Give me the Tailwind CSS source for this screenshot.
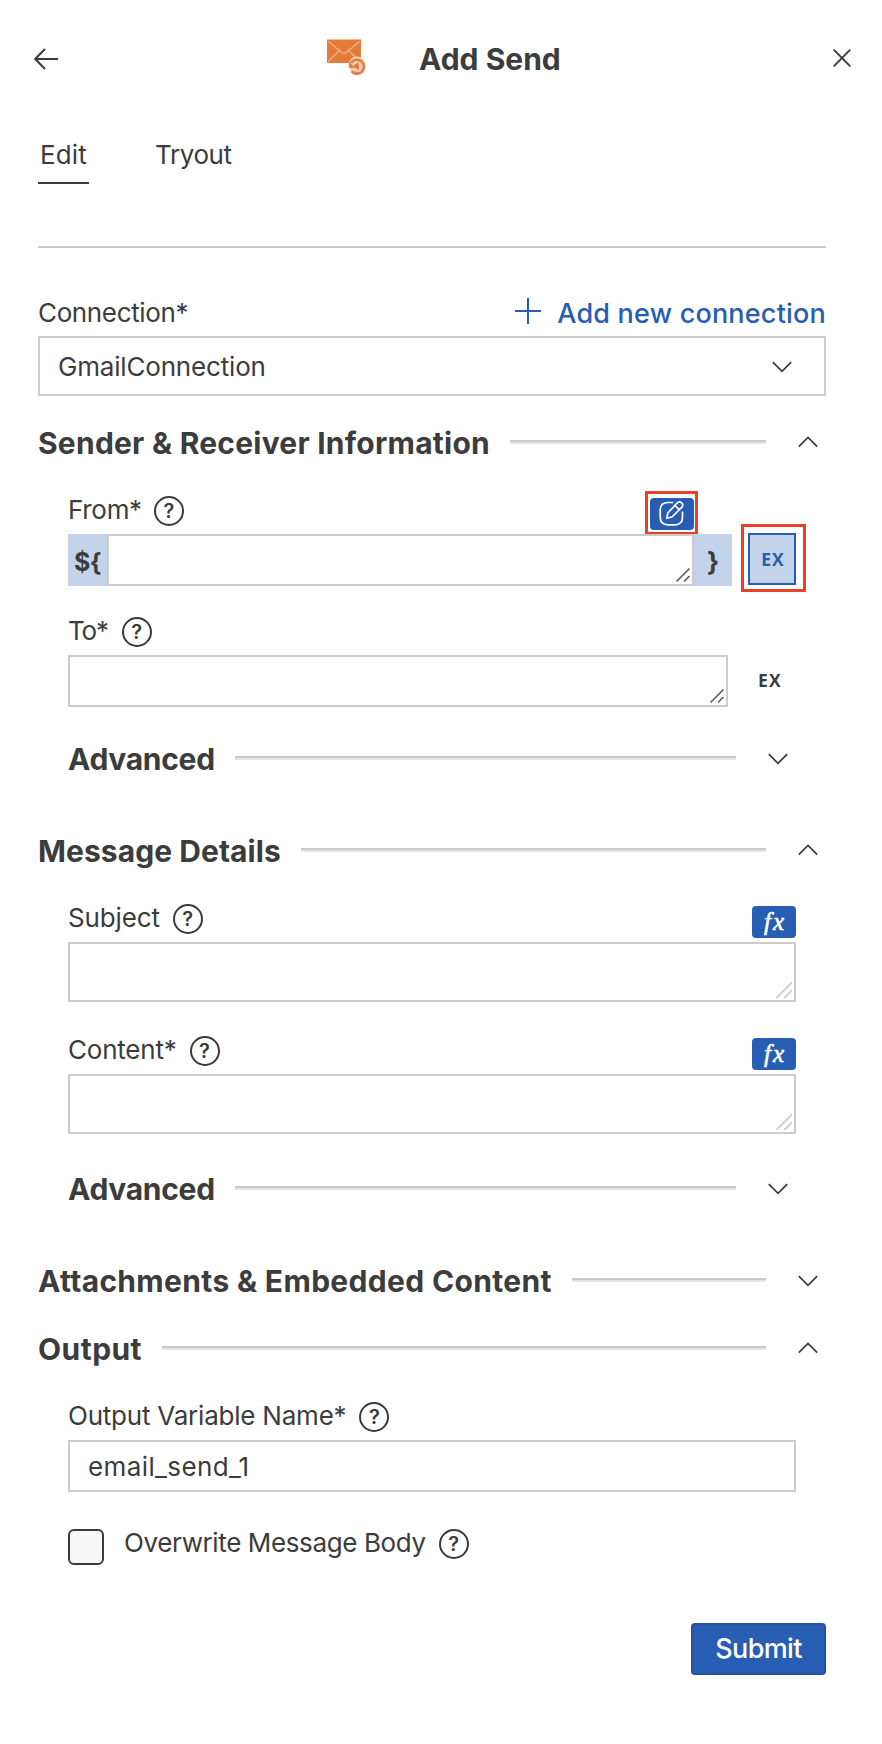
<!DOCTYPE html>
<html lang="en">
<head>
<meta charset="utf-8">
<title>Add Send</title>
<script src="https://cdn.jsdelivr.net/npm/@tailwindcss/browser@4"></script>
</head>
<body class="bg-white font-['Inter','Liberation_Sans',sans-serif] text-[26px] leading-8 text-[#3c3c3c]">
<svg class="hidden">
  <symbol id="down" viewBox="0 0 20 12"><path d="M.8 1.2 10 10.4l9.200-9.200" fill="none" stroke="#3a3a3a" stroke-width="1.7"/></symbol>
  <symbol id="up" viewBox="0 0 20 12"><path d="M.8 10.600 10 1.400l9.200 9.200" fill="none" stroke="#3a3a3a" stroke-width="1.7"/></symbol>
  <symbol id="grip-dark" viewBox="0 0 16 16"><path d="M1.500 14.500 14.500 1.500M9 14.500l5.500-5.500" fill="none" stroke="#555" stroke-width="1.500"/></symbol>
  <symbol id="grip-light" viewBox="0 0 16 16"><path d="M0 16 16 0M8 16l8-8" fill="none" stroke="#bdbdbd" stroke-width="1.200"/><path d="M1.800 16 16 1.800M9.800 16l6.200-6.200" fill="none" stroke="#e4e4e4" stroke-width="1.400"/></symbol>
</svg>
<main class="flex w-[882px] h-[1744px] flex-col overflow-hidden">

  <header class="mt-9 flex h-[46px] items-start pl-[34px]">
    <svg class="mt-3 h-[22px] w-6 shrink-0" viewBox="0 0 24 22" fill="none" stroke="#3a3a3a" stroke-width="2"><path d="M24 11H1.500M11 1 1.200 11 11 21"/></svg>
    <svg class="ml-[268px] mt-[3px] h-9 w-10 shrink-0" viewBox="0 0 40 36">
      <rect x="1" y="0.500" width="34" height="23.500" fill="#e57b38"/>
      <path d="M2 2l12.500 10.500q3.500 3.200 7 0L34 2M2 22.500 13 12M34 22.500 23 12" fill="none" stroke="#f0b088" stroke-width="1.300"/>
      <circle cx="31" cy="26" r="8.500" fill="#f8d3b9"/>
      <path d="M25 24a7 7 0 1 1 .5 8.200" fill="none" stroke="#e6834a" stroke-width="2.800"/>
      <path d="M26 33.500h5" stroke="#e6834a" stroke-width="2"/>
      <path d="M23 22.500v6.500h6z" fill="#e57b38"/>
      <path d="M28 26.800l4-2.300v5.500z" fill="#e57b38" stroke="#e57b38" stroke-width="1.500"/>
    </svg>
    <h1 class="ml-[53px] mt-[5px] w-[160px] text-[30px] leading-9 font-bold">Add Send</h1>
    <svg class="ml-[254px] mt-[13px] h-[18px] w-[18px] shrink-0" viewBox="0 0 18 18" fill="none" stroke="#3a3a3a" stroke-width="1.900" stroke-linecap="round"><path d="M1.200 1.200l15.600 15.600M16.800 1.200 1.200 16.800"/></svg>
  </header>

  <nav class="mx-[38px] mt-[57px] flex h-[45px] items-start">
    <div class="flex h-[45px] w-[51px] justify-center border-b-2 border-[#3a3a3a] tracking-[0.2px]">Edit</div>
    <div class="ml-[66px] tracking-[-0.41px]">Tryout</div>
  </nav>
  <div class="ml-[38px] mt-[62px] h-0.5 w-[788px] bg-[#c9c9c9]"></div>

  <div class="ml-[38px] mt-[49px] flex h-[39px] w-[788px] items-start justify-between">
    <label class="tracking-[-0.36px]">Connection*</label>
    <a class="flex items-start text-[27px] font-medium tracking-[0.2px] text-[#275db3]">
      <svg class="mr-4 mt-px h-[26px] w-[26px]" viewBox="0 0 26 26" stroke="#275db3" stroke-width="2"><path d="M13 0v26M0 13h26"/></svg><span class="mt-px">Add new connection</span></a>
  </div>
  <div class="ml-[38px] flex h-[60px] w-[788px] items-center justify-between border-2 border-[#ccc] pl-[18px] pr-8">
    <span class="mt-0.5 tracking-[-0.18px]">GmailConnection</span>
    <svg class="mt-0.5 h-3 w-5"><use href="#down"/></svg>
  </div>

  <section class="mt-[29px] ml-[38px] w-[788px]">
    <div class="flex h-9 items-start">
      <h2 class="w-[472px] shrink-0 text-[30px] leading-9 font-bold tracking-[0.23px] whitespace-nowrap">Sender &amp; Receiver Information</h2>
      <div class="mt-[15px] h-1 flex-1 border-b-2 border-[#e4e4e4] bg-[#c9c9c9] bg-clip-padding"></div>
      <svg class="mt-[11px] ml-8 mr-2 h-3 w-5"><use href="#up"/></svg>
    </div>

    <div class="ml-[30px] mt-[33px] flex h-10 items-start">
      <label class="tracking-[-0.3px]">From*</label>
      <span class="ml-3 mt-0.5 flex h-[30px] w-[30px] items-center justify-center rounded-full border-2 border-[#3a3a3a] text-[20px] leading-none font-semibold">?</span>
      <button class="-mt-[3px] ml-auto mr-[128px] flex h-[44px] w-[53px] items-start justify-center border-[3px] border-[#e8412a] pt-1">
        <span class="flex h-8 w-[44px] items-center justify-center rounded-[4px] bg-[#275db3]">
          <svg class="-mt-px h-[25px] w-[25px]" viewBox="0 0 25 25" fill="none" stroke="#fff" stroke-width="1.700" stroke-linecap="round" stroke-linejoin="round"><path d="M13.500 1.500H9Q1.200 1.500 1.200 9v7q0 7.800 7.800 7.800h7q7.500 0 7.500-7.800v-5"/><path d="M7.800 17.200l1-5.200L18.200 2a3.100 3.100 0 0 1 4.500 4.300L13 16z M16 4.500l4.500 4.300"/></svg>
        </span>
      </button>
    </div>
    <div class="ml-[30px] flex h-[52px] items-start">
      <div class="flex h-[52px] w-[39px] shrink-0 items-center justify-center bg-[#c3d4ea] pt-1 text-[25px] font-bold tracking-[-0.6px]">${</div>
      <div class="relative h-[52px] w-[587px] shrink-0 border-2 border-[#ccc] bg-white">
        <svg class="absolute right-px bottom-px h-4 w-4"><use href="#grip-dark"/></svg>
      </div>
      <div class="flex h-[52px] w-[38px] shrink-0 items-center justify-center bg-[#c3d4ea] pt-1 font-bold">}</div>
      <div class="-mt-2.5 ml-[9px] flex h-[68px] w-[65px] shrink-0 border-[3px] border-[#e8412a] pt-1.5 pl-1">
        <div class="flex h-[52px] w-12 items-center justify-center border-2 border-[#275db3] bg-[#c3d4ea] font-['Open_Sans',sans-serif] text-[17.500px] font-bold tracking-[1px] text-[#275db3]"><span class="ml-0.5">EX</span></div>
      </div>
    </div>

    <div class="ml-[30px] mt-[29px] flex h-10 items-start">
      <label class="tracking-[-1.2px]">To*</label>
      <span class="ml-[14px] mt-0.5 flex h-[30px] w-[30px] items-center justify-center rounded-full border-2 border-[#3a3a3a] text-[20px] leading-none font-semibold">?</span>
    </div>
    <div class="ml-[30px] flex h-[52px] items-center">
      <div class="relative h-[52px] w-[660px] shrink-0 border-2 border-[#ccc] bg-white">
        <svg class="absolute right-px bottom-px h-4 w-4"><use href="#grip-dark"/></svg>
      </div>
      <div class="-mt-0.5 ml-[30px] font-['Open_Sans',sans-serif] text-[17.500px] font-bold tracking-[1.2px]">EX</div>
    </div>

    <div class="ml-[30px] mt-[34px] flex h-9 items-start">
      <h3 class="w-[167px] shrink-0 text-[30px] leading-9 font-bold tracking-[-0.3px]">Advanced</h3>
      <div class="mt-[15px] h-1 w-[501px] border-b-2 border-[#e4e4e4] bg-[#c9c9c9] bg-clip-padding"></div>
      <svg class="mt-3 ml-8 h-3 w-5"><use href="#down"/></svg>
    </div>
  </section>

  <section class="mt-14 ml-[38px] w-[788px]">
    <div class="flex h-9 items-start">
      <h2 class="w-[263px] shrink-0 text-[30px] leading-9 font-bold tracking-[0.06px] whitespace-nowrap">Message Details</h2>
      <div class="mt-[15px] h-1 flex-1 border-b-2 border-[#e4e4e4] bg-[#c9c9c9] bg-clip-padding"></div>
      <svg class="mt-[11px] ml-8 mr-2 h-3 w-5"><use href="#up"/></svg>
    </div>

    <div class="ml-[30px] mt-[33px] flex h-10 w-[728px] items-start">
      <label class="tracking-[-0.15px]">Subject</label>
      <span class="ml-[13px] mt-0.5 flex h-[30px] w-[30px] items-center justify-center rounded-full border-2 border-[#3a3a3a] text-[20px] leading-none font-semibold">?</span>
      <button class="mt-1 ml-auto h-8 w-[44px] rounded-[4px] bg-[#275db3] pl-0.5 font-['Liberation_Serif',serif] text-[25px] leading-[28px] italic tracking-[2px] text-white [-webkit-text-stroke:0.6px_white]">fx</button>
    </div>
    <div class="relative ml-[30px] h-[60px] w-[728px] border-2 border-[#ccc] bg-white">
      <svg class="absolute right-0.5 bottom-0.5 h-4 w-4"><use href="#grip-light"/></svg>
    </div>

    <div class="ml-[30px] mt-8 flex h-10 w-[728px] items-start">
      <label class="tracking-[-0.22px]">Content*</label>
      <span class="ml-[13px] mt-0.5 flex h-[30px] w-[30px] items-center justify-center rounded-full border-2 border-[#3a3a3a] text-[20px] leading-none font-semibold">?</span>
      <button class="mt-1 ml-auto h-8 w-[44px] rounded-[4px] bg-[#275db3] pl-0.5 font-['Liberation_Serif',serif] text-[25px] leading-[28px] italic tracking-[2px] text-white [-webkit-text-stroke:0.6px_white]">fx</button>
    </div>
    <div class="relative ml-[30px] h-[60px] w-[728px] border-2 border-[#ccc] bg-white">
      <svg class="absolute right-0.5 bottom-0.5 h-4 w-4"><use href="#grip-light"/></svg>
    </div>

    <div class="ml-[30px] mt-[37px] flex h-9 items-start">
      <h3 class="w-[167px] shrink-0 text-[30px] leading-9 font-bold tracking-[-0.3px]">Advanced</h3>
      <div class="mt-[15px] h-1 w-[501px] border-b-2 border-[#e4e4e4] bg-[#c9c9c9] bg-clip-padding"></div>
      <svg class="mt-3 ml-8 h-3 w-5"><use href="#down"/></svg>
    </div>
  </section>

  <section class="mt-14 ml-[38px] flex h-9 w-[788px] items-start">
    <h2 class="w-[534px] shrink-0 text-[30px] leading-9 font-bold tracking-[0.33px] whitespace-nowrap">Attachments &amp; Embedded Content</h2>
    <div class="mt-[15px] h-1 flex-1 border-b-2 border-[#e4e4e4] bg-[#c9c9c9] bg-clip-padding"></div>
    <svg class="mt-3 ml-8 mr-2 h-3 w-5"><use href="#down"/></svg>
  </section>

  <section class="mt-8 ml-[38px] w-[788px]">
    <div class="flex h-9 items-start">
      <h2 class="w-[124px] shrink-0 text-[30px] leading-9 font-bold tracking-[0.45px]">Output</h2>
      <div class="mt-[15px] h-1 flex-1 border-b-2 border-[#e4e4e4] bg-[#c9c9c9] bg-clip-padding"></div>
      <svg class="mt-[11px] ml-8 mr-2 h-3 w-5"><use href="#up"/></svg>
    </div>
    <div class="ml-[30px] mt-[33px] flex h-10 items-start">
      <label class="tracking-[-0.22px]">Output Variable Name*</label>
      <span class="ml-[13px] mt-0.5 flex h-[30px] w-[30px] items-center justify-center rounded-full border-2 border-[#3a3a3a] text-[20px] leading-none font-semibold">?</span>
    </div>
    <div class="ml-[30px] flex h-[52px] w-[728px] items-center border-2 border-[#ccc] pl-[18px]">
      <span class="mt-0.5 tracking-[0.39px]">email_send_1</span>
    </div>
    <div class="ml-[30px] mt-[35px] flex h-[38px] items-start">
      <span class="mt-0.5 h-9 w-9 rounded-[6px] border-2 border-[#3a3a3a] bg-[#f7f7f7]"></span>
      <label class="ml-5 tracking-[-0.38px]">Overwrite Message Body</label>
      <span class="ml-[13px] mt-0.5 flex h-[30px] w-[30px] items-center justify-center rounded-full border-2 border-[#3a3a3a] text-[20px] leading-none font-semibold">?</span>
    </div>
  </section>

  <button class="mt-[58px] ml-[691px] h-[52px] w-[135px] rounded-[4px] border-2 border-[#23539f] bg-[#275db3] text-[27px] leading-[48px] font-medium tracking-[-0.65px] text-white">Submit</button>
</main>
</body>
</html>
